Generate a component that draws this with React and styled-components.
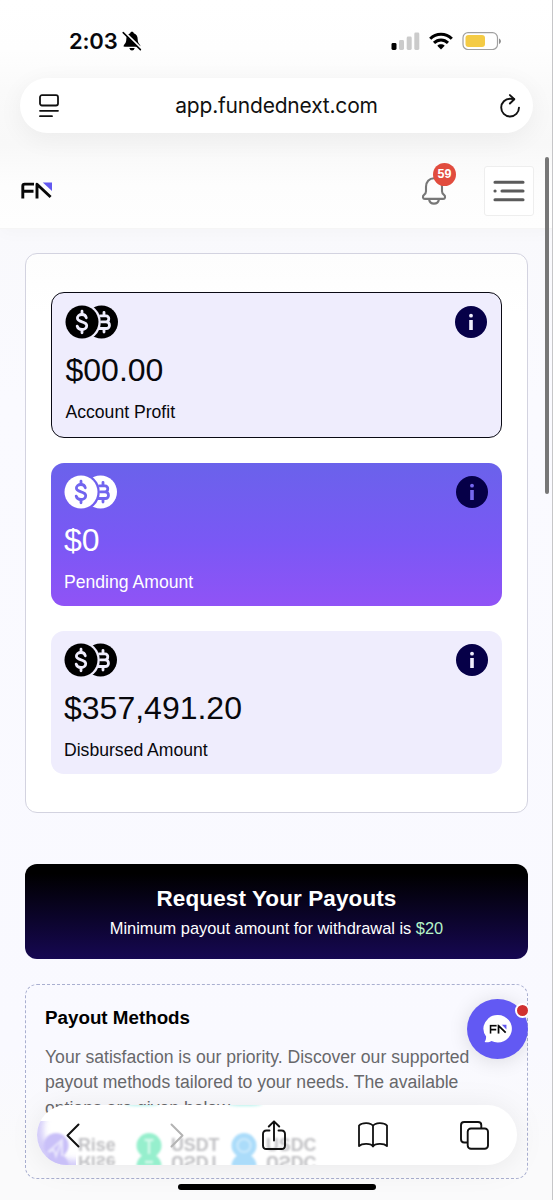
import styled, { createGlobalStyle, css } from 'styled-components';

const App = () => {
  return (
    <Screen>
      <GlobalStyle />
      <TopArea>
        <StatusBar>
          <Clock>
            <Time>2:03</Time>
            <SilentIcon />
          </Clock>
          <Signals>
            <CellularIcon />
            <WifiIcon />
            <BatteryIcon />
          </Signals>
        </StatusBar>
        <AddressBar>
          <ReaderIcon />
          <Url>app.fundednext.com</Url>
          <ReloadIcon />
        </AddressBar>
        <Header>
          <FnLogo />
          <HeaderActions>
            <BellWrap>
              <BellIcon />
              <Badge>59</Badge>
            </BellWrap>
            <MenuButton>
              <MenuIcon />
            </MenuButton>
          </HeaderActions>
        </Header>
      </TopArea>

      <Main>
        <Summary>
          {cards.map((card) => (
            <BalanceCard key={card.label} $variant={card.variant}>
              <CardTop>
                <CoinsIcon id={card.variant} color={card.variant === 'purple' ? '#fff' : '#000'} />
                <InfoIcon color={card.variant === 'purple' ? '#7668f0' : '#efedfd'} />
              </CardTop>
              <Amount>{card.amount}</Amount>
              <Label>{card.label}</Label>
            </BalanceCard>
          ))}
        </Summary>

        <RequestButton>
          <RequestTitle>Request Your Payouts</RequestTitle>
          <RequestText>
            Minimum payout amount for withdrawal is <Green>$20</Green>
          </RequestText>
        </RequestButton>

        <Methods>
          <MethodsTitle>Payout Methods</MethodsTitle>
          <MethodsText>
            Your satisfaction is our priority. Discover our supported
            <br />
            payout methods tailored to your needs. The available
            <br />
            options are given below.
          </MethodsText>
        </Methods>
      </Main>

      <Chat>
        <ChatButton>
          <ChatIcon />
        </ChatButton>
        <ChatDot />
      </Chat>

      <BottomBar>
        <Behind>
          <EdgeTint />
          <Glow $x={88} />
          <Glow $x={191} />
          {methods.map((method) => (
            <Method key={method.name} $x={method.x}>
              <MethodIcon color={method.color} kind={method.name} />
              <MethodNames>
                <MethodName>{method.name}</MethodName>
                <MethodName $flip>{method.name}</MethodName>
              </MethodNames>
            </Method>
          ))}
        </Behind>
        <Tools>
          <ArrowTools>
            <BackIcon />
            <ForwardIcon />
          </ArrowTools>
          <PageTools>
            <ShareIcon />
            <BookIcon />
            <TabsIcon />
          </PageTools>
        </Tools>
      </BottomBar>
      <HomeIndicator />
      <ScrollThumb />
      <EdgeLine />
    </Screen>
  );
};

const cards = [
  { amount: '$00.00', label: 'Account Profit', variant: 'outlined' },
  { amount: '$0', label: 'Pending Amount', variant: 'purple' },
  { amount: '$357,491.20', label: 'Disbursed Amount', variant: 'plain' },
];

const methods = [
  { name: 'Rise', x: 5, color: '#c9c0f8' },
  { name: 'USDT', x: 98, color: '#96efcd' },
  { name: 'USDC', x: 193, color: '#abdcfa' },
];

const FnLogo = () => (
  <svg width="32" height="17" viewBox="0 0 32 17" fill="none">
    <path d="M1.800 16.500V4Q1.800 2.100 3.600 2.100H13M2 9.300H12.500" stroke="#080808" strokeWidth="2.900" />
    <path d="M16 16.500V2.300L29.600 15" stroke="#080808" strokeWidth="2.900" strokeLinejoin="round" />
    <path d="M21.800 .5H31V9Z" fill="#6359f0" />
  </svg>
);

const SilentIcon = () => (
  <svg width="20" height="20" viewBox="0 0 20 20">
    <path d="M10 .8C8.900 .8 8.300 1.500 8.200 2.300C5.500 3.200 4.300 5.500 4.300 8.200C4.300 12 2.600 12.700 1.700 14.500C1.500 15.300 1.900 15.700 2.600 15.700H17.400C18.100 15.700 18.500 15.300 18.300 14.500C17.400 12.700 15.700 12 15.700 8.200C15.700 5.500 14.500 3.200 11.800 2.300C11.700 1.500 11.100 .8 10 .8Z" />
    <path d="M7.300 17H12.700Q12 19.500 10 19.500Q8 19.500 7.300 17Z" />
    <path d="M2.200 .8L19.300 17.500" stroke="#fff" strokeWidth="2" />
    <path d="M1.200 1.600L18.400 18.600" stroke="#000" strokeWidth="1.500" strokeLinecap="round" />
  </svg>
);

const CellularIcon = () => (
  <svg width="29" height="18" viewBox="0 0 29 18">
    <rect x="0.500" y="11" width="5" height="7" rx="1.400" />
    <rect x="8" y="8" width="5" height="10" rx="1.400" fill="#cbcbcb" />
    <rect x="15.700" y="4.500" width="5" height="13.500" rx="1.400" fill="#cbcbcb" />
    <rect x="23.300" y="0.500" width="5" height="17.500" rx="1.400" fill="#cbcbcb" />
  </svg>
);

const WifiIcon = () => (
  <svg width="24" height="18" viewBox="0 0 24 18" fill="none" stroke="#000" strokeWidth="3">
    <path d="M1.200 6.800C7.200 .6 16.800 .6 22.800 6.800" />
    <path d="M5 10.900C9 7 15 7 19 10.900" />
    <path d="M8.300 13.700C10.300 11.800 13.700 11.800 15.700 13.700L12 17.500Z" fill="#000" stroke="none" />
  </svg>
);

const BatteryIcon = () => (
  <svg width="40" height="18" viewBox="0 0 40 18">
    <rect x="1" y=".7" width="34.500" height="16.800" rx="5" fill="#fff" stroke="#a0a0a0" strokeWidth="1.200" />
    <rect x="3.500" y="3.100" width="19.500" height="12" rx="3" fill="#f4cb45" />
    <path d="M37 6.500V12C39.600 11 39.600 7.500 37 6.500Z" fill="#8d8d8d" />
  </svg>
);

const ReaderIcon = () => (
  <svg width="20" height="24" viewBox="0 0 20 24" fill="none" stroke="#111" strokeWidth="1.800" strokeLinecap="round">
    <rect x="1" y="1.200" width="18" height="10.300" rx="2" />
    <path d="M1 16.800H19M1 22.200H13" />
  </svg>
);

const ReloadIcon = () => (
  <svg width="20" height="24" viewBox="0 0 20 24" fill="none" stroke="#111" strokeWidth="1.900" strokeLinecap="round" strokeLinejoin="round">
    <path d="M14 5.200C12.800 4.900 11.500 4.700 10.200 4.700A8.900 8.900 0 1 0 19 13.600" />
    <path d="M9.900 1.100L14.300 5.200L9.900 9.500" />
  </svg>
);

const BellIcon = () => (
  <svg width="26" height="28" viewBox="0 0 26 28" fill="none" stroke="#777" strokeWidth="2.100" strokeLinejoin="round">
    <path d="M13 1.300C8.100 1.300 5 5 5 9.700V14.200C5 16.300 4.600 16.700 3 17.900C1.200 19.300 1.800 21.900 3.800 21.900H22.200C24.200 21.900 24.800 19.300 23 17.900C21.400 16.700 21 16.300 21 14.200V9.700C21 5 17.900 1.300 13 1.300Z" />
    <path d="M8 22.200C8.600 25.400 10.600 26.600 13 26.600S17.400 25.400 18 22.200" />
  </svg>
);

const MenuIcon = () => (
  <svg width="32" height="22" viewBox="0 0 32 22" fill="none" stroke="#5b5b5b" strokeWidth="3.100" strokeLinecap="round">
    <path d="M2 2.200H30M9 11H30M2 19.700H30M2 11H2.100" />
  </svg>
);

const CoinsIcon = ({ id, color }) => (
  <svg width="54" height="34" viewBox="0 0 54 34" fill="none">
    <mask id={`coin-${id}`}>
      <rect width="54" height="34" fill="#fff" />
      <circle cx="17" cy="17" r="18.800" fill="#000" />
    </mask>
    <circle cx="36.500" cy="17" r="16.500" fill={color} mask={`url(#coin-${id})`} />
    <circle cx="17" cy="17" r="16.500" fill={color} />
    <g stroke="var(--cut)" strokeWidth="2.800" strokeLinecap="round">
      <path d="M21.300 12.800C20.800 10.700 19.200 9.500 17 9.500C14.300 9.500 12.400 11 12.400 13.100C12.400 18 21.700 15.700 21.700 20.700C21.700 23 19.700 24.500 17 24.500C14.500 24.500 12.700 23.200 12.200 21.100" />
      <path d="M17 6.200V9.500M17 24.500V27.800" />
      <path d="M35.500 10.800H41C44.800 10.800 44.600 16.900 41 16.900H36.500M41 16.900C45.600 16.900 45.600 23.500 41.200 23.500H34.300" />
      <path d="M39 7.300V10M39 24V27" />
    </g>
  </svg>
);

const InfoIcon = ({ color }) => (
  <svg width="32" height="32" viewBox="0 0 32 32">
    <circle cx="16" cy="16" r="16" fill="#060048" />
    <circle cx="16" cy="9.700" r="1.900" fill={color} />
    <rect x="14.200" y="14" width="3.600" height="10" fill={color} />
  </svg>
);

const ChatIcon = () => (
  <svg width="30" height="30" viewBox="0 0 30 30">
    <path d="M15 1A14 13.700 0 1 1 8.500 26.900C6.800 28.200 4.200 28.500 1.600 28C2.800 26.500 3.100 24.800 3.100 22.600A14 13.700 0 0 1 15 1Z" fill="#fff" />
    <svg x="6.500" y="10.500" width="17.500" height="9.300" viewBox="0 0 32 17" fill="none">
      <path d="M1.700 17V2H13M1.700 9.200H12.300M16.500 17V2.200L29.600 15" stroke="#080808" strokeWidth="3.200" />
      <path d="M22.200 0H31V9Z" fill="#6359f0" />
    </svg>
  </svg>
);

const MethodIcon = ({ color, kind }) => (
  <svg width="28" height="34" viewBox="0 0 28 34" fill="none">
    <circle cx="14" cy="13.500" r="12.500" fill={color} />
    <circle cx="14" cy="34" r="12.500" fill={color} />
    <g stroke="#fff" strokeOpacity=".6" strokeWidth="2.500">
      {kind === 'Rise' && <path d="M6 20L20 8V24M6 20L12 18L14 24L20 8" strokeWidth="2" />}
      {kind === 'USDT' && <path d="M9.500 8H18.500M14 8V22M10 30H18" />}
      {kind === 'USDC' && <circle cx="14" cy="13.500" r="6.500" strokeOpacity=".35" />}
    </g>
  </svg>
);

const BackIcon = () => (
  <svg width="14" height="25" viewBox="0 0 14 25" fill="none" stroke="#111" strokeWidth="2" strokeLinecap="round" strokeLinejoin="round">
    <path d="M12.500 1.500L1.500 12.500L12.500 23.500" />
  </svg>
);

const ForwardIcon = () => (
  <svg width="14" height="25" viewBox="0 0 14 25" fill="none" stroke="#b3b3b3" strokeWidth="2" strokeLinecap="round" strokeLinejoin="round">
    <path d="M1.500 1.500L12.500 12.500L1.500 23.500" />
  </svg>
);

const ShareIcon = () => (
  <svg width="24" height="31" viewBox="0 0 24 31" fill="none" stroke="#111" strokeWidth="1.900" strokeLinecap="round" strokeLinejoin="round">
    <path d="M7.500 10.500H4.500Q1 10.500 1 14V25.500Q1 29 4.500 29H19.500Q23 29 23 25.500V14Q23 10.500 19.500 10.500H16.500" />
    <path d="M12 20.500V1.500M6.800 6.500L12 1.300L17.200 6.500" />
  </svg>
);

const BookIcon = () => (
  <svg width="30" height="26" viewBox="0 0 30 26" fill="none" stroke="#111" strokeWidth="1.800" strokeLinejoin="round">
    <path d="M15 4C13 .3 4 .3 1 3.500V24C4 21 13 21 15 24.500C17 21 26 21 29 24V3.500C26 .3 17 .3 15 4ZM15 4V24.500" />
  </svg>
);

const TabsIcon = () => (
  <svg width="29" height="29" viewBox="0 0 29 29" fill="none" stroke="#111" strokeWidth="1.900">
    <path d="M7.500 21.500H4.200Q1 21.500 1 18.300V4.200Q1 1 4.200 1H18Q21.300 1 21.300 4.200V7.500" />
    <rect x="7.700" y="7.500" width="20.300" height="20.300" rx="3.300" />
  </svg>
);

const GlobalStyle = createGlobalStyle`
  * {
    box-sizing: border-box;
  }

  body {
    margin: 0;
    background-color: #fafaff;
  }

  p, h2 {
    margin: 0;
  }

  svg {
    display: block;
    flex-shrink: 0;
  }
`;

const Screen = styled.div`
  position: relative;
  width: 553px;
  height: 1200px;
  overflow: hidden;
  background: linear-gradient(#f9f9fc 228px, #fafaff 400px, #f9f9ff 1050px, #fafafb 1150px);
  font-family: 'Liberation Sans', Arial, sans-serif;
  color: #08080c;
`;

const TopArea = styled.div`
  height: 229px;
  background: linear-gradient(#fff 0, #fefefe 50px, #fafafa 90px, #f8f8f8 145px, #fdfdfd 185px, #fefefe);
  border-bottom: 1px solid #f5f5f5;
  box-shadow: 0 4px 16px rgba(0, 0, 0, 0.025);
`;

const StatusBar = styled.div`
  display: flex;
  justify-content: space-between;
  align-items: center;
  height: 78px;
  padding: 3px 51px 0 69px;
`;

const Clock = styled.div`
  display: flex;
  align-items: center;
  gap: 4px;
`;

const Time = styled.span`
  width: 49px;
  font-family: Inter, sans-serif;
  font-size: 22px;
  font-weight: 600;
  letter-spacing: -0.2px;
  white-space: nowrap;
`;

const Signals = styled.div`
  display: flex;
  align-items: center;
  gap: 9px;
`;

const AddressBar = styled.div`
  display: flex;
  align-items: center;
  justify-content: space-between;
  height: 55px;
  margin: 0 20px;
  padding: 0 13px 0 19px;
  border-radius: 28px;
  background-color: #fff;
  box-shadow: 0 6px 26px rgba(0, 0, 0, 0.055);
`;

const Url = styled.span`
  margin-right: 6px;
  font-family: Inter, sans-serif;
  font-size: 21px;
  letter-spacing: -0.2px;
  color: #111;
`;

const Header = styled.div`
  display: flex;
  justify-content: space-between;
  align-items: center;
  height: 95px;
  padding: 20px 19px 0 21px;
`;

const HeaderActions = styled.div`
  display: flex;
  align-items: center;
  gap: 37px;
`;

const BellWrap = styled.div`
  position: relative;
`;

const Badge = styled.span`
  position: absolute;
  top: -14px;
  right: -9px;
  width: 23px;
  height: 23px;
  border-radius: 50%;
  background-color: #e14c3e;
  color: #fff;
  font-size: 12.5px;
  font-weight: bold;
  line-height: 23px;
  text-align: center;
`;

const MenuButton = styled.div`
  display: flex;
  align-items: center;
  justify-content: center;
  width: 50px;
  height: 50px;
  border: 1px solid #eee;
  border-radius: 3px;
  background-color: #fff;
`;

const Main = styled.div`
  padding: 24px 25px 0;
`;

const Summary = styled.div`
  display: flex;
  flex-direction: column;
  gap: 25px;
  height: 560px;
  padding: 38px 25px;
  border: 1px solid #d3d3e0;
  border-radius: 12px;
  background: linear-gradient(#fdfdfd, #fff 60px);
`;

const variants = {
  outlined: css`
    --cut: #efedfd;
    height: 146px;
    padding: 12px 13px 0;
    border: 1.500px solid #0a0a14;
    background-color: #efedfd;
  `,
  purple: css`
    --cut: #7165ef;
    height: 143px;
    padding: 12px 13px 0 12.500px;
    background: linear-gradient(#6a62eb, #7a58f5 55%, #9053f6);
    color: #fff;
  `,
  plain: css`
    --cut: #efedfd;
    height: 143px;
    padding: 12px 13px 0 12.500px;
    background-color: #efedfd;
  `,
};

const BalanceCard = styled.div`
  border-radius: 13px;
  ${({ $variant }) => variants[$variant]};
`;

const CardTop = styled.div`
  display: flex;
  justify-content: space-between;
  align-items: center;
  padding-right: 1px;
`;

const Amount = styled.p`
  margin-top: 12px;
  padding-left: 0.5px;
  font-size: 32px;
  line-height: 38px;
`;

const Label = styled.p`
  margin-top: 13px;
  padding-left: 0.5px;
  font-size: 17.600px;
  line-height: 21px;
`;

const RequestButton = styled.div`
  height: 95px;
  margin-top: 51px;
  padding-top: 21px;
  border-radius: 12px;
  background: linear-gradient(#000 10%, #160852);
  color: #fff;
  text-align: center;
`;

const RequestTitle = styled.h2`
  font-size: 22.500px;
  line-height: 28px;
  letter-spacing: 0.1px;
`;

const RequestText = styled.p`
  margin-top: 5px;
  font-size: 16.400px;
  line-height: 20px;
`;

const Green = styled.span`
  color: #b5f3c7;
`;

const Methods = styled.div`
  height: 195px;
  margin-top: 25px;
  padding: 20px 19px;
  border: 1px dashed #a9afd0;
  border-radius: 12px;
`;

const MethodsTitle = styled.h2`
  font-size: 18.800px;
  line-height: 26px;
  color: #000;
`;

const MethodsText = styled.p`
  margin-top: 14px;
  font-size: 17.600px;
  line-height: 25.300px;
  white-space: nowrap;
  color: #68686b;
`;

/* the chat widget is cut off at the page's right content edge */
const Chat = styled.div`
  position: absolute;
  top: 999px;
  left: 467px;
  width: 61px;
  height: 61px;
  clip-path: inset(-30px 0 -40px -40px);
`;

const ChatButton = styled.div`
  display: flex;
  align-items: center;
  justify-content: center;
  width: 61px;
  height: 60px;
  border-radius: 50%;
  background-color: #6259f3;
  box-shadow: 0 2px 20px rgba(0, 0, 0, 0.12);
`;

const ChatDot = styled.span`
  position: absolute;
  top: 4px;
  left: 48px;
  width: 15px;
  height: 15px;
  border: 2px solid #fff;
  border-radius: 50%;
  background-color: #d03030;
`;

const BottomBar = styled.div`
  position: absolute;
  top: 1105px;
  left: 37px;
  width: 480px;
  height: 60px;
  overflow: hidden;
  border-radius: 30px;
  background-color: #fff;
  filter: drop-shadow(0 2px 14px rgba(0, 0, 0, 0.07));
`;

const Behind = styled.div`
  position: absolute;
  inset: 0;
`;

const EdgeTint = styled.span`
  position: absolute;
  top: 0;
  left: -1px;
  width: 64px;
  height: 62px;
  border-radius: 50%;
  box-shadow: inset 7px -7px 6px rgba(201, 192, 248, 0.8);
  clip-path: inset(16px 24px 0 0);
`;

const Glow = styled.span`
  position: absolute;
  top: -3px;
  left: ${({ $x }) => $x}px;
  width: 34px;
  height: 4px;
  border-radius: 50%;
  background-color: #b5f2ec;
  filter: blur(1.500px);
`;

const Method = styled.div`
  position: absolute;
  top: 27px;
  left: ${({ $x }) => $x}px;
  display: flex;
  gap: 8px;
  filter: blur(1.200px);
`;

const MethodNames = styled.div`
  display: flex;
  flex-direction: column;
  gap: 1px;
  padding-top: 5px;
`;

const MethodName = styled.span`
  height: 16px;
  color: #c0c0c3;
  font-size: 17.800px;
  font-weight: bold;
  line-height: 16px;
  transform: ${({ $flip }) => ($flip ? 'scaleY(-1)' : 'none')};
`;

const Tools = styled.div`
  position: relative;
  display: flex;
  align-items: center;
  gap: 78px;
  height: 60px;
  padding-left: 29px;
`;

const ArrowTools = styled.div`
  display: flex;
  gap: 90px;
`;

const PageTools = styled.div`
  display: flex;
  align-items: center;
  gap: 72px;
`;

const HomeIndicator = styled.div`
  position: absolute;
  top: 1184px;
  left: 178px;
  width: 198px;
  height: 6px;
  border-radius: 3px;
  background-color: #000;
`;

const ScrollThumb = styled.div`
  position: absolute;
  top: 157px;
  left: 545px;
  width: 4px;
  height: 337px;
  border-radius: 2px;
  background-color: #777;
`;

const EdgeLine = styled.div`
  position: absolute;
  top: 0;
  right: 0;
  width: 1px;
  height: 1200px;
  background-color: #c6c6c8;
`;

export default App;
